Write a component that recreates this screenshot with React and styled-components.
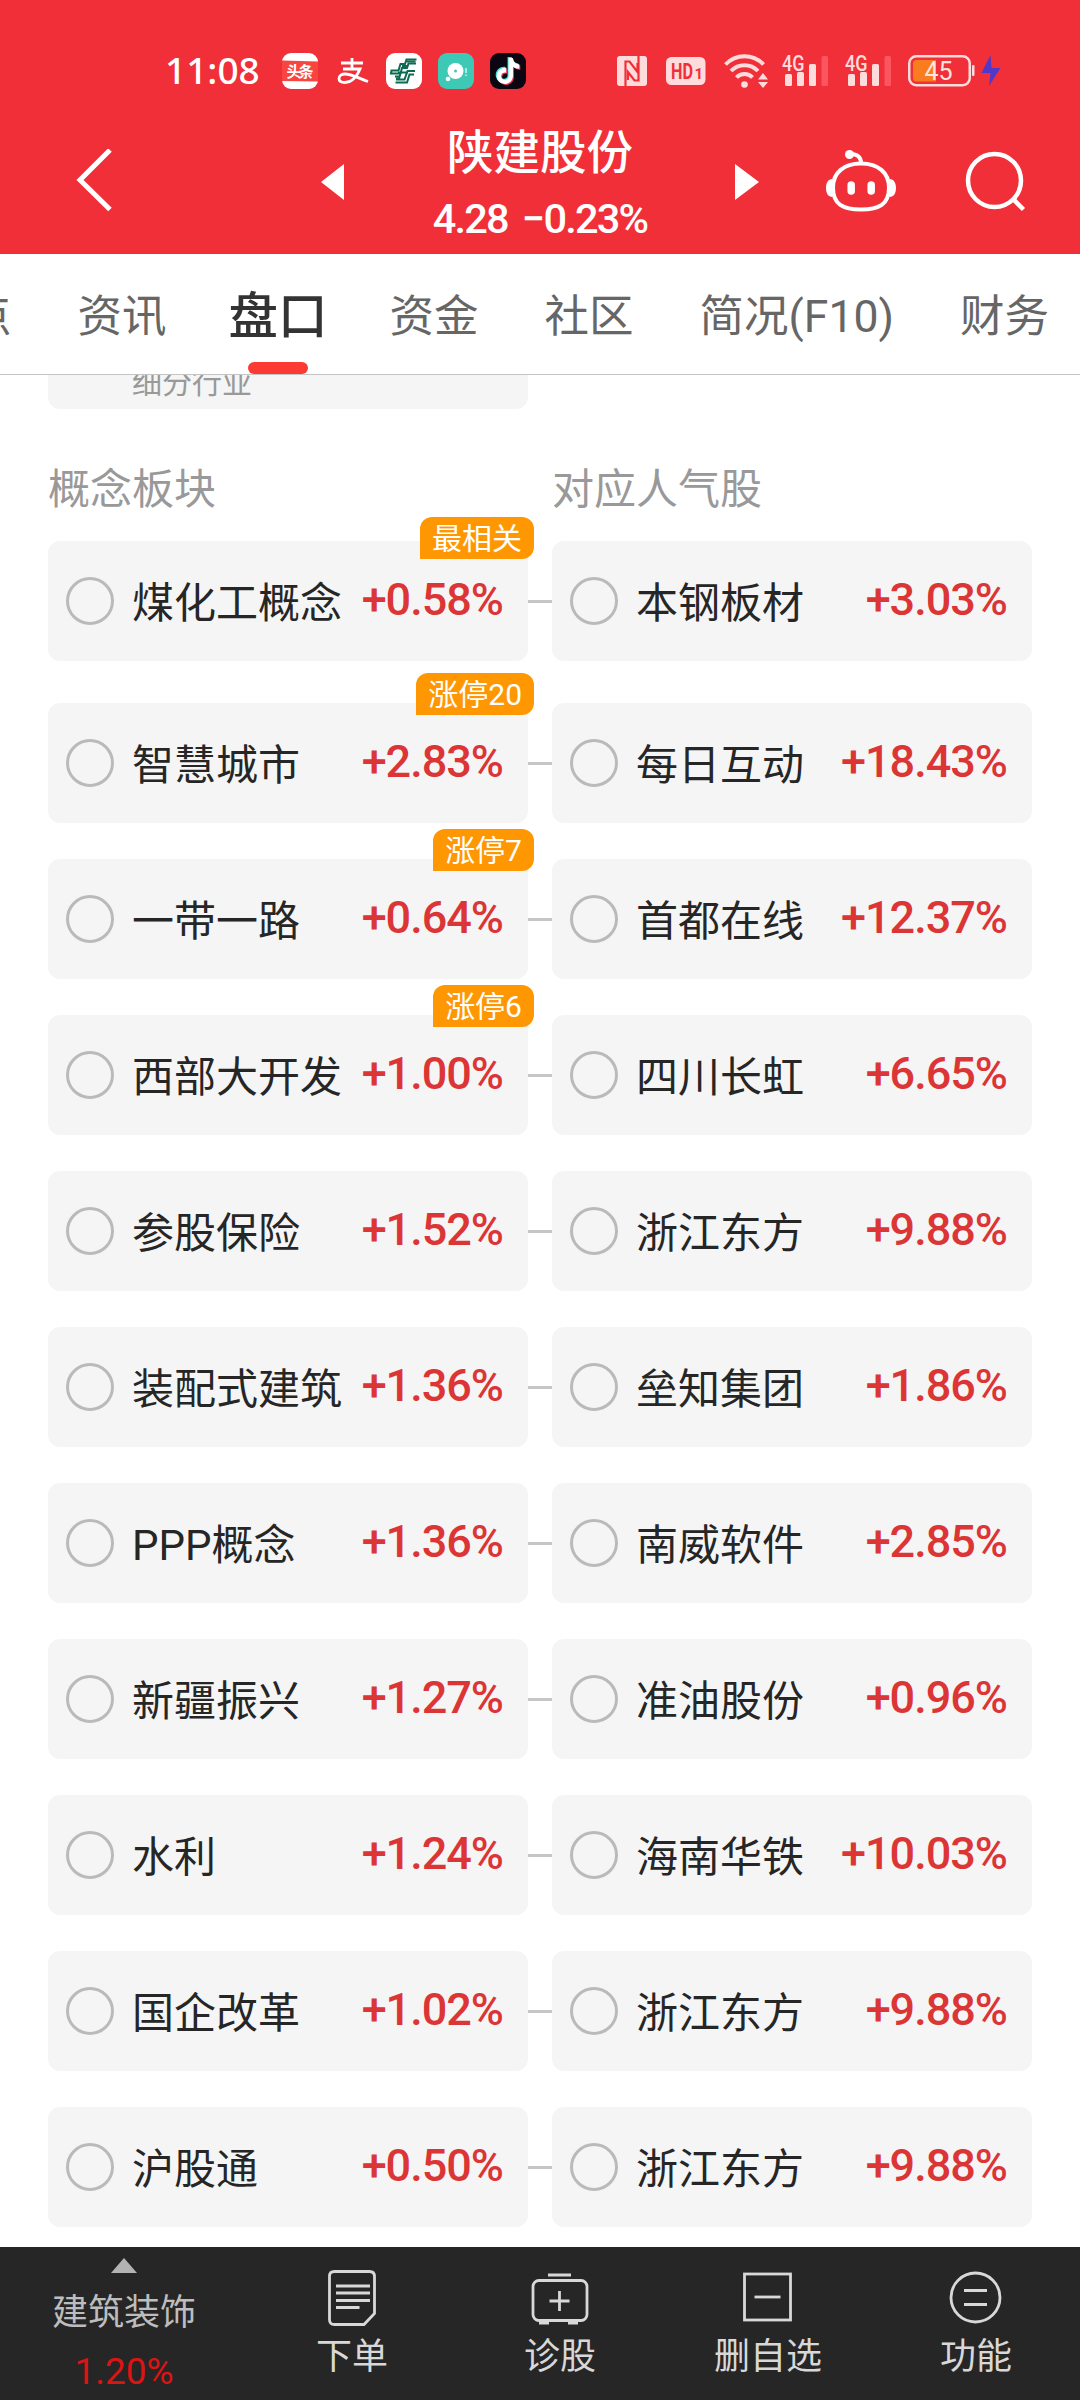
import React from 'react'
import styled, { createGlobalStyle } from 'styled-components'
import { SiTiktok } from 'react-icons/si'

const sectors = [
  { name: '煤化工概念', change: '+0.58%', badge: '最相关', stock: '本钢板材', stockChange: '+3.03%' },
  { name: '智慧城市', change: '+2.83%', badge: '涨停20', stock: '每日互动', stockChange: '+18.43%' },
  { name: '一带一路', change: '+0.64%', badge: '涨停7', stock: '首都在线', stockChange: '+12.37%' },
  { name: '西部大开发', change: '+1.00%', badge: '涨停6', stock: '四川长虹', stockChange: '+6.65%' },
  { name: '参股保险', change: '+1.52%', stock: '浙江东方', stockChange: '+9.88%' },
  { name: '装配式建筑', change: '+1.36%', stock: '垒知集团', stockChange: '+1.86%' },
  { name: 'PPP概念', change: '+1.36%', stock: '南威软件', stockChange: '+2.85%' },
  { name: '新疆振兴', change: '+1.27%', stock: '准油股份', stockChange: '+0.96%' },
  { name: '水利', change: '+1.24%', stock: '海南华铁', stockChange: '+10.03%' },
  { name: '国企改革', change: '+1.02%', stock: '浙江东方', stockChange: '+9.88%' },
  { name: '沪股通', change: '+0.50%', stock: '浙江东方', stockChange: '+9.88%' },
]

const tabs = ['点', '资讯', '盘口', '资金', '社区', '简况(F10)', '财务']

const Signal = () => (
  <StatusSvg width="46" height="34" viewBox="0 0 46 34">
    <text x="0" y="16.5" fontSize="22" fontWeight="500" fill="#ffdcdc" textLength="22.5" lengthAdjust="spacingAndGlyphs">4G</text>
    <g fill="#ffdcdc">
      <rect x="3" y="20" width="7" height="12" rx="1.5" />
      <rect x="15" y="18" width="7" height="14" rx="1.5" />
      <rect x="27" y="10" width="7" height="22" rx="1.5" />
      <rect x="39.5" y="2" width="6.5" height="30" rx="1.5" fill="#fb5560" />
    </g>
  </StatusSvg>
)

const StatusBar = () => (
  <Status>
    <Clock>11:08</Clock>
    <AppIcons>
      <svg width="36" height="36" viewBox="0 0 36 36">
        <rect width="36" height="36" rx="9" fill="#fff" />
        <path d="M0 7.5l36 1v20l-36-.5z" fill="#f8453f" />
        <text x="18" y="24" fontSize="15" fontWeight="700" fill="#fff" textAnchor="middle" textLength="27">头条</text>
      </svg>
      <svg width="36" height="36" viewBox="0 0 36 36" fill="none" stroke="#fff" strokeWidth="2.8">
        <path d="M7 10h22M18 5v11M9 16h17c-3 7-8 13.5-15 13.5-4 0-6-1.5-6-4C5 22.5 8 21 11 21c7 0 14 4.5 23 7.5" />
      </svg>
      <svg width="36" height="36" viewBox="0 0 36 36">
        <rect width="36" height="36" rx="9" fill="#fff" />
        <g fill="none" stroke="#0c6b50" strokeWidth="2">
          <path d="M30.500 6.500H20.500l-1.500 4.500h-4.500l-2 6.500H5.500l-.5 3h9" />
          <path d="M30 10.500h-7.500l-1.500 4.500h-5l-1.500 5.500-1.500 5H10" />
          <path d="M20.500 8.500h9M16 13h5M29 18h-7.500l-3 8.500H10M28 21.500h-4.500l-2.500 8H9.500M9 23.500h5M12 19.500h10" />
        </g>
      </svg>
      <svg width="36" height="36" viewBox="0 0 36 36">
        <rect width="36" height="36" rx="9" fill="#3dc9b5" />
        <circle cx="17.5" cy="18" r="8" fill="#fff" />
        <circle cx="17.5" cy="18" r="1.5" fill="#3dc9b5" />
        <circle cx="10" cy="26" r="2.3" fill="#fff" />
        <path d="M28 15v5M28 21.5v1.5" stroke="#c9f5ee" strokeWidth="1.5" />
      </svg>
      <TikTok>
        <SiTiktok size={26} />
      </TikTok>
    </AppIcons>
    <SystemIcons>
      <svg width="32" height="30" viewBox="0 0 32 30">
        <rect width="30" height="30" rx="3" fill="#ffdcdc" />
        <path d="M8.500 30V5.500h4l8 10.500V7M21.500 0v24.500h-4L11 16v8" fill="none" stroke="#f12f38" strokeWidth="2.200" />
      </svg>
      <svg width="41" height="28" viewBox="0 0 41 28">
        <rect width="39.5" height="28" rx="5.5" fill="#ffdcdc" />
        <text x="5" y="22" fontSize="22" fontWeight="700" fill="#f12f38" textLength="22" lengthAdjust="spacingAndGlyphs">HD</text>
        <text x="28.5" y="22" fontSize="15" fontWeight="700" fill="#f12f38">1</text>
      </svg>
      <StatusSvg width="41" height="36" viewBox="0 0 41 36">
        <g fill="none" stroke="#ffdcdc" strokeWidth="4">
          <path d="M1.5 11.5a26 26 0 0 1 38 0" />
          <path d="M7 18a18.5 18.5 0 0 1 27 0" />
          <path d="M12.5 24.5a11 11 0 0 1 16 0" />
        </g>
        <circle cx="20.5" cy="31.5" r="3.3" fill="#ffdcdc" />
        <path d="M34 26.5l5-6.5 5 6.5zM34 29l5 6 5-6z" fill="#ffdcdc" />
      </StatusSvg>
      <Signal />
      <Signal />
      <svg width="96" height="34" viewBox="0 0 96 34">
        <rect x="1.25" y="2.25" width="60.5" height="29" rx="7" fill="none" stroke="#ffdcdc" strokeWidth="2.5" />
        <path d="M8.5 6H28v21.5H8.5a3.5 3.5 0 0 1-3.5-3.5V9.5A3.5 3.5 0 0 1 8.5 6z" fill="#f97c1e" />
        <rect x="64" y="11" width="2.5" height="11" rx="1" fill="#ffdcdc" />
        <text x="30.5" y="26" fontSize="25" fill="#ffe4dc" textAnchor="middle">45</text>
        <path d="M82.500 1L73.500 19h9l-1.500 13L92.500 14H83.500z" fill="#5138c8" />
      </svg>
    </SystemIcons>
  </Status>
)

const Header = () => (
  <TitleBar>
    <BackSlot>
      <svg width="38" height="66" viewBox="0 0 38 66" fill="none" stroke="#fff" strokeWidth="5">
        <path d="M34 1L4 31l30 29.5" />
      </svg>
    </BackSlot>
    <TitleGroup>
      <svg width="24" height="36" viewBox="0 0 24 36" fill="#fff"><path d="M23 0v36L0 18z" /></svg>
      <Titles>
        <Title>陕建股份</Title>
        <Quote><span>4.28</span><span>−0.23%</span></Quote>
      </Titles>
      <svg width="24" height="36" viewBox="0 0 24 36" fill="#fff"><path d="M0 0v36l24-18z" /></svg>
    </TitleGroup>
    <Actions>
      <svg width="70" height="64" viewBox="0 0 70 64" fill="none" stroke="#fff" strokeWidth="4">
        <path d="M35 13.5c17 0 28 9 28 24 0 17-10 22-28 22S7 54.500 7 37.500c0-15 11-24 28-24z" />
        <path d="M35 13c0-6-4-9-10-9" />
        <circle cx="23.5" cy="4.5" r="4.500" fill="#fff" stroke="none" />
        <path d="M6.500 29C2 29 0 33 0 38s2 9 6.500 9zM63.500 29c4.500 0 6.500 4 6.500 9s-2 9-6.500 9z" fill="#fff" stroke="none" />
        <path d="M25.200 35v6M45.200 35v6" strokeWidth="7.5" strokeLinecap="round" />
      </svg>
      <svg width="62" height="62" viewBox="0 0 62 62" fill="none" stroke="#fff" strokeWidth="4.5">
        <circle cx="29.5" cy="29.5" r="26.5" />
        <path d="M48 48l10.5 10.5" />
      </svg>
    </Actions>
  </TitleBar>
)

const Stock = ({ name, change, badge, first }) => (
  <Card>
    <Radio />
    <Name>{name}</Name>
    <Change>{change}</Change>
    {badge && <Badge $first={first}>{badge}</Badge>}
  </Card>
)

const Footer = () => (
  <BottomBar>
    <IndexItem>
      <svg width="26" height="15" viewBox="0 0 26 15" fill="#b3b3b3"><path d="M13 0l13 15H0z" /></svg>
      <IndexName>建筑装饰</IndexName>
      <IndexChange>1.20%</IndexChange>
    </IndexItem>
    <NavItem>
      <svg width="58" height="58" viewBox="0 0 58 58">
        <path d="M11.5 3.500h35q5 0 5 5v37L41 56.500H11.500q-5 0-5-5v-43q0-5 5-5z" />
        <path d="M13 18h34M13 25h34M13 32.500h34M13 39.500h23.500" />
      </svg>
      下单
    </NavItem>
    <NavItem>
      <svg width="58" height="58" viewBox="0 0 58 58">
        <rect x="2" y="12.5" width="54" height="40" rx="6" />
        <path d="M17 7h23M28.500 23v20M18.500 33h20M8 55h10M37 55h10" />
      </svg>
      诊股
    </NavItem>
    <NavItem>
      <svg width="58" height="58" viewBox="0 0 58 58">
        <rect x="5.5" y="6" width="46" height="46" />
        <path d="M15.500 29h26" />
      </svg>
      删自选
    </NavItem>
    <NavItem>
      <svg width="58" height="58" viewBox="0 0 58 58">
        <circle cx="28.5" cy="29.5" r="24.5" />
        <path d="M17 22.500h23M17 36.500h23" />
      </svg>
      功能
    </NavItem>
  </BottomBar>
)

export default function App() {
  return (
    <Page>
      <GlobalStyle />
      <StatusBar />
      <Header />
      <Tabs>
        {tabs.map(tab => <Tab key={tab} $active={tab === '盘口'}>{tab}</Tab>)}
      </Tabs>
      <Content>
        <ClippedCard><span>细分行业</span></ClippedCard>
        <Headings>
          <Heading>概念板块</Heading>
          <Heading>对应人气股</Heading>
        </Headings>
        {sectors.map((s, i) => (
          <Row key={s.name} $first={i === 0}>
            <Stock name={s.name} change={s.change} badge={s.badge} first={i === 0} />
            <Connector />
            <Stock name={s.stock} change={s.stockChange} />
          </Row>
        ))}
      </Content>
      <Footer />
    </Page>
  )
}

const GlobalStyle = createGlobalStyle`
  * {
    box-sizing: border-box;
  }

  body {
    margin: 0;
    background: #fff;
  }

  svg {
    display: block;
    flex: none;
  }
`

const Page = styled.div`
  display: flex;
  flex-direction: column;
  width: 1080px;
  height: 2400px;
  overflow: hidden;
  font-family: Roboto, 'Noto Sans CJK SC', sans-serif;
  white-space: nowrap;
`

const Status = styled.div`
  display: flex;
  align-items: center;
  flex: none;
  height: 110px;
  padding: 32px 76px 0 165px;
  background: #f12f38;
`

const Clock = styled.div`
  width: 117px;
  padding-bottom: 2px;
  color: #fff;
  font: 500 37px/38px 'Noto Sans', sans-serif;
`

const AppIcons = styled.div`
  display: flex;
  gap: 16px;
`

const TikTok = styled.div`
  display: flex;
  align-items: center;
  justify-content: center;
  width: 36px;
  height: 36px;
  border-radius: 9px;
  background: #0b0612;
  color: #fff;

  & svg {
    filter: drop-shadow(-1px -1px 0 #35e0dc) drop-shadow(1px 1px 0 #f4375f);
  }
`

const SystemIcons = styled.div`
  display: flex;
  align-items: center;
  gap: 17px;
  margin-left: auto;
`

const StatusSvg = styled.svg`
  overflow: visible;
`

const TitleBar = styled.div`
  display: flex;
  align-items: center;
  flex: none;
  height: 144px;
  padding: 0 53px 0 76px;
  background: #f12f38;
`

const BackSlot = styled.div`
  width: 245px;
`

const TitleGroup = styled.div`
  display: flex;
  align-items: center;
  justify-content: space-between;
  width: 438px;
`

const Titles = styled.div`
  display: flex;
  flex-direction: column;
  align-items: center;
  padding-top: 10px;
  color: #fff;
`

const Title = styled.div`
  font-size: 46.5px;
  font-weight: 500;
  line-height: 64px;
`

const Quote = styled.div`
  display: flex;
  gap: 14px;
  font-size: 41.5px;
  font-weight: 500;
  line-height: 68px;
  letter-spacing: -1.8px;
`

const Actions = styled.div`
  display: flex;
  align-items: center;
  gap: 69px;
  margin-left: auto;
`

const Tabs = styled.div`
  display: flex;
  align-items: stretch;
  gap: 66px;
  flex: none;
  height: 121px;
  margin-left: -33px;
  border-bottom: 1px solid #c4c4c4;
`

const Tab = styled.div`
  position: relative;
  flex: none;
  margin: ${p => (p.$active ? '0 -4px' : '0')};
  padding-top: 3px;
  color: ${p => (p.$active ? '#333' : '#666')};
  font-size: ${p => (p.$active ? 49.5 : 44.5)}px;
  font-weight: ${p => (p.$active ? 500 : 400)};
  line-height: 120px;

  &::after {
    content: '';
    display: ${p => (p.$active ? 'block' : 'none')};
    position: absolute;
    bottom: 0;
    left: calc(50% - 30px);
    width: 60px;
    height: 12px;
    border-radius: 6px;
    background: #fa3a33;
  }
`

const Content = styled.div`
  flex: 1;
  min-height: 0;
  padding: 0 48px;
  overflow: hidden;
`

const ClippedCard = styled.div`
  display: flex;
  align-items: flex-end;
  width: 480px;
  height: 34px;
  padding: 0 0 4px 84px;
  border-radius: 0 0 12px 12px;
  background: #f5f5f5;
  overflow: hidden;
  color: #999;
  font-size: 30px;
  line-height: 44px;
`

const Headings = styled.div`
  display: grid;
  grid-template-columns: 504px 1fr;
  margin-top: 51px;
  height: 81px;
`

const Heading = styled.div`
  color: #999;
  font-size: 42px;
  line-height: 60px;
`

const Row = styled.div`
  display: grid;
  grid-template-columns: 480px 24px 480px;
  align-items: center;
  margin-bottom: ${p => (p.$first ? 42 : 36)}px;
`

const Card = styled.div`
  position: relative;
  display: flex;
  align-items: center;
  height: 120px;
  padding: 0 25px 0 18px;
  border-radius: 12px;
  background: #f5f5f5;
`

const Radio = styled.div`
  flex: none;
  width: 48px;
  height: 48px;
  border: 3px solid #bababa;
  border-radius: 50%;
`

const Name = styled.div`
  margin-left: 18px;
  padding-top: 5px;
  color: #262626;
  font-size: 42px;
  line-height: 60px;
`

const Change = styled.div`
  margin-left: auto;
  padding-bottom: 2px;
  color: #dc3535;
  font-size: 45px;
  font-weight: 500;
  line-height: 60px;
  letter-spacing: -1px;
`

const Badge = styled.div`
  position: absolute;
  top: ${p => (p.$first ? -24 : -30)}px;
  right: -6px;
  height: 42px;
  padding: 0 12px;
  border-radius: 12px 12px 12px 0;
  background: #ff9703;
  color: #fff;
  font-size: 30px;
  line-height: 44px;
`

const Connector = styled.div`
  height: 3px;
  background: #c6c6c6;
`

const BottomBar = styled.div`
  display: flex;
  flex: none;
  height: 153px;
  background: #262626;
`

const IndexItem = styled.div`
  display: flex;
  flex-direction: column;
  align-items: center;
  width: 248px;
  padding-top: 11px;
`

const IndexName = styled.div`
  margin-top: 18px;
  color: #bdbdbd;
  font-size: 36px;
  line-height: 44px;
`

const IndexChange = styled.div`
  margin-top: 15px;
  color: #dc1414;
  font-size: 37px;
  line-height: 44px;
`

const NavItem = styled.div`
  display: flex;
  flex: 1;
  flex-direction: column;
  align-items: center;
  padding-top: 21px;
  color: #d8d8d8;
  font-size: 36px;
  line-height: 62px;

  & svg {
    fill: none;
    stroke: #d8d8d8;
    stroke-width: 2.8px;
  }
`
